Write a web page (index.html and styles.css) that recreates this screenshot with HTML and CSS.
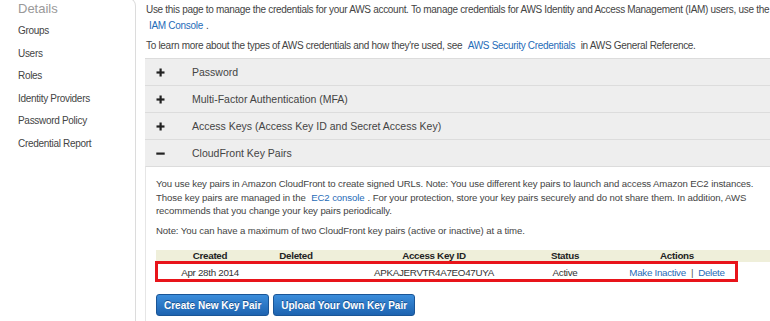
FILE: index.html
```html
<!DOCTYPE html>
<html lang="en">
<head>
  <meta charset="UTF-8">
  <title>Security Credentials</title>
  <link rel="stylesheet" href="styles.css">
</head>
<body>
  <div class="page">
    <aside class="sidebar">
      <div class="side-title">Details</div>
      <ul class="side-nav">
        <li>Groups</li>
        <li>Users</li>
        <li>Roles</li>
        <li>Identity Providers</li>
        <li>Password Policy</li>
        <li>Credential Report</li>
      </ul>
    </aside>

    <main class="content">
      <p class="intro intro-first">Use this page to manage the credentials for your AWS account. To manage credentials for AWS Identity and Access Management (IAM) users, use the <a href="#">IAM Console</a>.</p>
      <p class="intro">To learn more about the types of AWS credentials and how they're used, see <a href="#">AWS Security Credentials</a> in AWS General Reference.</p>

      <div class="accordion">
        <div class="acc-head">
          <span class="acc-icon"><svg width="9" height="9" viewBox="0 0 9 9"><rect x="3.5" y="0.5" width="2.2" height="8" fill="#222"/><rect x="0.5" y="3.4" width="8" height="2.2" fill="#222"/></svg></span>
          Password
        </div>
        <div class="acc-head">
          <span class="acc-icon"><svg width="9" height="9" viewBox="0 0 9 9"><rect x="3.5" y="0.5" width="2.2" height="8" fill="#222"/><rect x="0.5" y="3.4" width="8" height="2.2" fill="#222"/></svg></span>
          Multi-Factor Authentication (MFA)
        </div>
        <div class="acc-head">
          <span class="acc-icon"><svg width="9" height="9" viewBox="0 0 9 9"><rect x="3.5" y="0.5" width="2.2" height="8" fill="#222"/><rect x="0.5" y="3.4" width="8" height="2.2" fill="#222"/></svg></span>
          Access Keys (Access Key ID and Secret Access Key)
        </div>
        <div class="acc-head open">
          <span class="acc-icon"><svg width="9" height="9" viewBox="0 0 9 9"><rect x="0.3" y="3.5" width="8.4" height="2.2" fill="#222"/></svg></span>
          CloudFront Key Pairs
        </div>

        <div class="acc-body">
          <p class="body-text">You use key pairs in Amazon CloudFront to create signed URLs. Note: You use different key pairs to launch and access Amazon EC2 instances. Those key pairs are managed in the <a href="#">EC2 console</a>. For your protection, store your key pairs securely and do not share them. In addition, AWS recommends that you change your key pairs periodically.</p>
          <p class="body-text note">Note: You can have a maximum of two CloudFront key pairs (active or inactive) at a time.</p>

          <div class="keys-wrap">
            <table class="keys">
              <colgroup>
                <col class="c-created">
                <col class="c-deleted">
                <col class="c-id">
                <col class="c-status">
                <col class="c-actions">
                <col>
              </colgroup>
              <thead>
                <tr>
                  <th>Created</th>
                  <th>Deleted</th>
                  <th>Access Key ID</th>
                  <th>Status</th>
                  <th>Actions</th>
                  <th></th>
                </tr>
              </thead>
              <tbody>
                <tr>
                  <td>Apr 28th 2014</td>
                  <td></td>
                  <td>APKAJERVTR4A7EO47UYA</td>
                  <td>Active</td>
                  <td><a href="#">Make Inactive</a><span class="sep">|</span><a href="#">Delete</a></td>
                  <td></td>
                </tr>
              </tbody>
            </table>
            <span class="highlight"></span>
          </div>

          <div class="key-buttons">
            <button class="btn">Create New Key Pair</button>
            <button class="btn">Upload Your Own Key Pair</button>
          </div>
        </div>
      </div>
    </main>
  </div>
</body>
</html>
```

FILE: styles.css
```css
:root {
  --text: #444;
  --link: #1f6cb8;
  --line: #dcdcdc;
  --acc-bg: #eeeeee;
}
html, body {
  margin: 0;
  overflow: hidden;
  background: #fff;
  font-family: "Liberation Sans", Arial, sans-serif;
  color: var(--text);
}
a { color: var(--link); text-decoration: none; }

.page {
  display: flex;
  align-items: flex-start;
  min-height: 321px;
}

/* Боковая панель */
.sidebar {
  flex: 0 0 117px;
  min-height: 340px;
  margin-top: -3px;
  padding-left: 18px;
  border-right: 1px solid var(--line);
  border-top: 1px solid var(--line);
  border-top-right-radius: 9px;
}
.side-title {
  font-size: 13px;
  line-height: 18px;
  color: #999;
  margin-top: 2px;
}
.side-nav {
  list-style: none;
  margin: 2px 0 0;
  padding: 0;
}
.side-nav li {
  font-size: 10px;
  letter-spacing: -0.3px;
  line-height: 22.5px;
  color: #444;
}

/* Основная часть */
.content {
  flex: 0 0 640px;
  padding-left: 9px;
}
.intro {
  margin: 4px 0 0 1px;
  width: 625px;
  font-size: 10px;
  letter-spacing: -0.3px;
  line-height: 16px;
}
.intro-first { margin-top: 2px; }
.intro a { padding: 0 3px; }

.accordion { margin-top: 4px; }
.acc-head {
  display: flex;
  align-items: center;
  height: 26px;
  border-top: 1px solid var(--line);
  background: var(--acc-bg);
  font-size: 10.5px;
  color: #444;
}
.acc-icon {
  display: flex;
  width: 47px;
  padding-left: 11px;
  box-sizing: border-box;
}
.acc-body {
  border-top: 1px solid var(--line);
  border-left: 1px solid #e6e6e6;
  padding: 10px 0 20px 10px;
}
.body-text {
  margin: 0;
  width: 605px;
  font-size: 9.6px;
  letter-spacing: -0.1px;
  line-height: 13.5px;
}
.body-text a { padding: 0 3px; }
.note { margin-top: 6px; }

.keys-wrap {
  position: relative;
  margin-top: 13px;
}
.keys {
  border-collapse: collapse;
  width: 630px;
  font-size: 9.8px;
  letter-spacing: -0.3px;
}
.c-created { width: 108px; }
.c-deleted { width: 64px; }
.c-id { width: 212px; }
.c-status { width: 50px; }
.c-actions { width: 174px; }
.keys th {
  background: #efefda;
  color: #222;
  font-weight: bold;
  height: 12px;
  line-height: 12px;
  padding: 0;
  text-align: center;
}
.keys td {
  height: 20px;
  padding: 0;
  text-align: center;
  color: #333;
}
.keys .sep { margin: 0 5px; color: #555; }
.highlight {
  position: absolute;
  left: -1px;
  top: 11px;
  width: 577px;
  height: 15px;
  border: 3px solid #e8141a;
}

.key-buttons {
  display: flex;
  gap: 4px;
  margin-top: 12px;
}
.btn {
  height: 22px;
  padding: 0 7px;
  border: 1px solid #1a5596;
  border-radius: 3px;
  background: linear-gradient(#3b8ddb, #1d63b0);
  color: #fff;
  font-family: "Liberation Sans", Arial, sans-serif;
  font-size: 10px;
  font-weight: bold;
  text-shadow: 0 -1px 0 #174f8c;
  cursor: pointer;
}
```
